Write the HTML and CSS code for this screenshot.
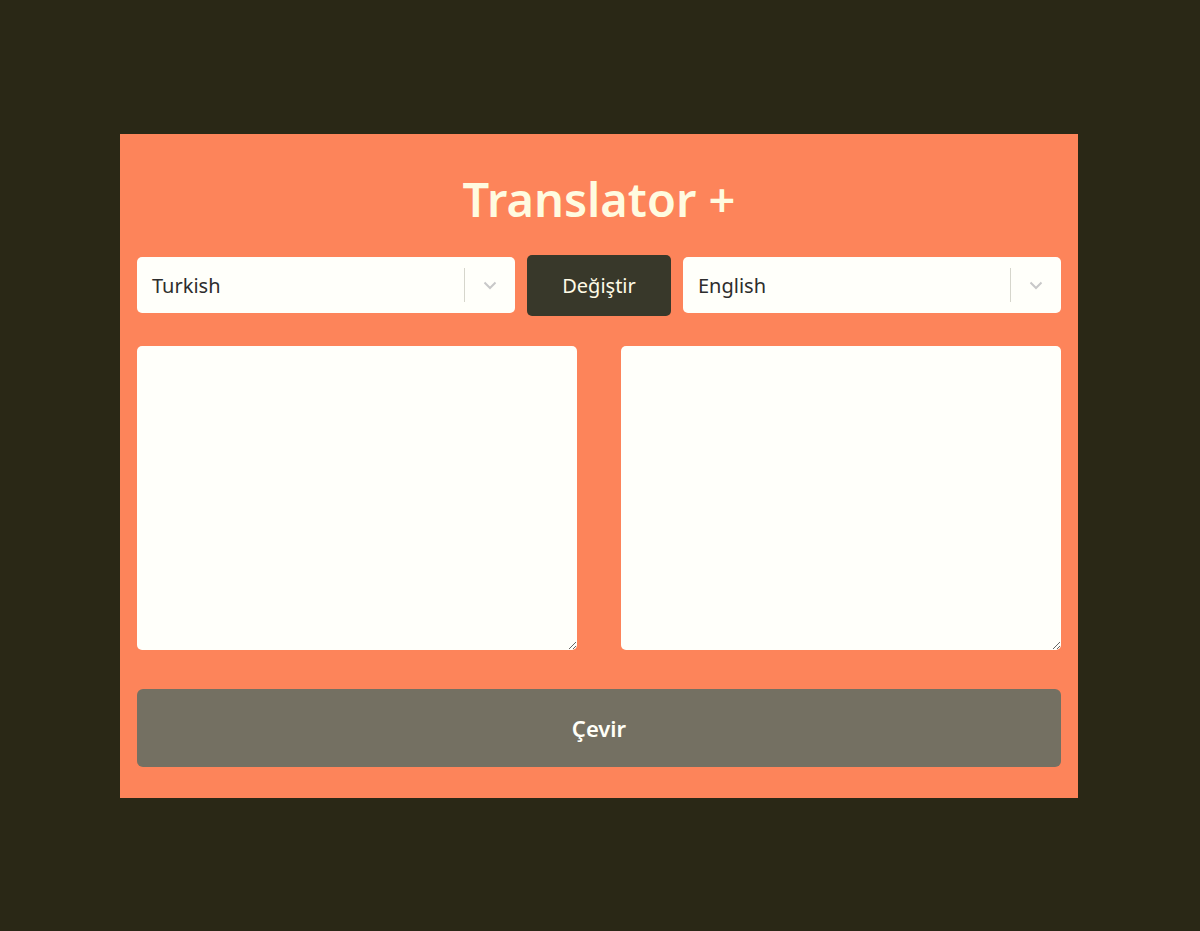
FILE: index.html
```html
<!DOCTYPE html>
<html lang="tr">
<head>
    <meta charset="UTF-8">
    <meta name="viewport" content="width=device-width, initial-scale=1.0">
    <title>Translator +</title>
    <link rel="stylesheet" href="styles.css">
</head>
<body>
    <div class="card">
        <h1>Translator +</h1>
        <div class="lang-row">
            <div class="select">
                <span class="select-value">Turkish</span>
                <span class="select-sep"></span>
                <svg class="select-arrow" width="20" height="20" viewBox="0 0 20 20">
                    <path d="M4.5 7.5 L10 13 L15.5 7.5" fill="none" stroke="currentColor" stroke-width="2"/>
                </svg>
            </div>
            <button class="swap">Değiştir</button>
            <div class="select">
                <span class="select-value">English</span>
                <span class="select-sep"></span>
                <svg class="select-arrow" width="20" height="20" viewBox="0 0 20 20">
                    <path d="M4.5 7.5 L10 13 L15.5 7.5" fill="none" stroke="currentColor" stroke-width="2"/>
                </svg>
            </div>
        </div>
        <div class="text-row">
            <textarea class="text-box"></textarea>
            <textarea class="text-box"></textarea>
        </div>
        <button class="translate">Çevir</button>
    </div>
</body>
</html>
```

FILE: styles.css
```css
body {
    font-family: "Noto Sans", "Open Sans", sans-serif;
    margin: 0;
    padding: 0;
    background-color: #2a2816;
    display: flex;
    justify-content: center;
    align-items: center;
    height: 100vh;
}
.card {
    background: #fd845a;
    width: 958px;
    margin-right: 2px;
    box-sizing: border-box;
    padding: 17px 17px 31px;
}
h1 {
    margin: 16px 0 24px;
    text-align: center;
    font-size: 47px;
    line-height: 64px;
    font-weight: 600;
    color: #fffbe0;
}
.lang-row {
    display: flex;
    align-items: center;
    gap: 12px;
    height: 61px;
}
.select {
    flex: 1;
    height: 56px;
    background: #fffffa;
    border-radius: 5px;
    display: flex;
    align-items: center;
    padding-left: 15px;
    box-sizing: border-box;
}
.select-value {
    flex: 1;
    font-size: 20px;
    color: #2d2d2d;
}
.select-sep {
    width: 1px;
    height: 34px;
    background: #d6d6cc;
}
.select-arrow {
    color: #c8c8c8;
    padding: 0 15px;
}
.swap {
    width: 144px;
    height: 61px;
    background: #38382a;
    color: #fffbe6;
    border: none;
    border-radius: 5px;
    font-family: inherit;
    font-size: 20px;
    cursor: pointer;
}
.text-row {
    display: flex;
    gap: 44px;
    margin-top: 30px;
}
.text-box {
    flex: 1;
    height: 304px;
    box-sizing: border-box;
    background: #fffffa;
    border: none;
    border-radius: 5px;
    font-family: inherit;
    font-size: 18px;
    padding: 10px;
}
.translate {
    display: block;
    width: 100%;
    height: 78px;
    margin-top: 39px;
    background: #747062;
    color: #fffff8;
    border: none;
    border-radius: 6px;
    font-family: inherit;
    font-size: 22px;
    font-weight: 600;
    cursor: pointer;
}
```
